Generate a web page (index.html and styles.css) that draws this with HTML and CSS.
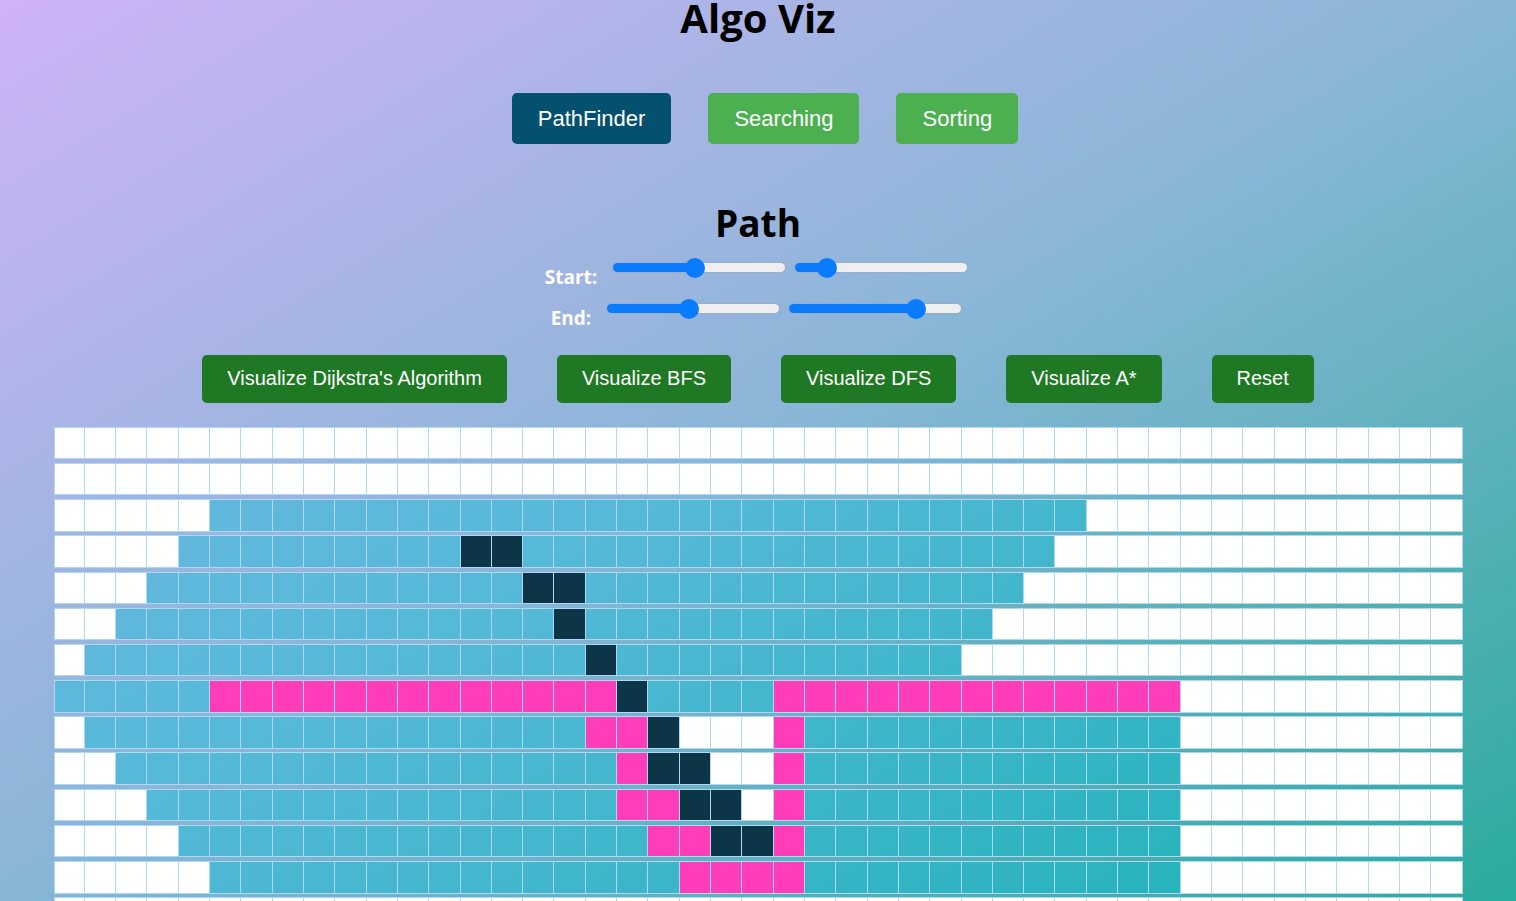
FILE: index.html
```html
<!DOCTYPE html>
<html lang="en">
<head>
<meta charset="utf-8">
<title>Algo Viz</title>
<link rel="stylesheet" href="styles.css">
</head>
<body>
<header class="app-header">
  <h1 class="title">Algo Viz</h1>
  <nav class="tabs">
    <button class="tab tab-active">PathFinder</button>
    <button class="tab">Searching</button>
    <button class="tab">Sorting</button>
  </nav>
</header>
<main class="pathfinder">
  <h2 class="section-title">Path</h2>
  <div class="points">
    <div class="point-row">
      <label class="point-label">Start:</label>
      <input class="slider" type="range" min="0" max="100" value="47" style="--v:0.47">
      <input class="slider" type="range" min="0" max="100" value="14" style="--v:0.14">
    </div>
    <div class="point-row">
      <label class="point-label">End:</label>
      <input class="slider" type="range" min="0" max="100" value="47" style="--v:0.47">
      <input class="slider" type="range" min="0" max="100" value="77" style="--v:0.77">
    </div>
  </div>
  <div class="actions">
    <button class="action-btn">Visualize Dijkstra's Algorithm</button>
    <button class="action-btn">Visualize BFS</button>
    <button class="action-btn">Visualize DFS</button>
    <button class="action-btn">Visualize A*</button>
    <button class="action-btn">Reset</button>
  </div>
  <div class="board" id="board"></div>
</main>
<script src="script.js"></script>
</body>
</html>
```

FILE: styles.css
```css
* {
  box-sizing: border-box;
}

html {
  min-height: 100%;
  background: linear-gradient(to bottom right, #cfb3f7 0%, #88b6d6 50%, #2aab9c 100%) fixed;
}

body {
  margin: 0;
  font-family: "Open Sans", "Noto Sans", sans-serif;
  color: #000;
}

.title {
  margin: 0;
  text-align: center;
  font-size: 40px;
  line-height: 36px;
  font-weight: 700;
}

.tabs {
  display: flex;
  justify-content: center;
  gap: 37px;
  margin-top: 57px;
  padding-left: 14px;
}

.tab {
  font-family: "Liberation Sans", Arial, sans-serif;
  font-size: 22px;
  line-height: 25px;
  color: #fff;
  border: 0;
  border-radius: 5px;
  padding: 13px 26px;
  background: #4caf50;
}

.tab-active {
  background: #04506f;
}

.section-title {
  margin: 59px 0 0;
  text-align: center;
  font-size: 37px;
  line-height: 40px;
  font-weight: 700;
}

.points {
  margin-top: 4px;
  padding-right: 4px;
}

.point-row {
  display: flex;
  justify-content: center;
  align-items: center;
  gap: 10px;
}

.point-label {
  color: #fff;
  font-weight: 700;
  font-size: 19px;
  line-height: 22px;
  margin-top: 19px;
  margin-right: 6px;
}

.slider {
  -webkit-appearance: none;
  appearance: none;
  width: 172px;
  height: 9px;
  margin: 0;
  border: 0;
  border-radius: 5px;
  background: linear-gradient(to right, #0a7bff calc(10px + (100% - 20px) * var(--v)), #efefef 0);
  box-shadow: 0 0 0 1px rgba(160, 160, 160, 0.35);
  outline: none;
}

.slider::-webkit-slider-thumb {
  -webkit-appearance: none;
  appearance: none;
  width: 20px;
  height: 20px;
  border: 0;
  border-radius: 50%;
  background: #0a7bff;
}

.actions {
  display: flex;
  justify-content: center;
  gap: 50px;
  margin-top: 25.5px;
}

.action-btn {
  font-family: "Liberation Sans", Arial, sans-serif;
  font-size: 20px;
  line-height: 23px;
  color: #fff;
  border: 0;
  border-radius: 5px;
  padding: 12.5px 25px;
  background: #1f7824;
}

.board {
  width: 1409px;
  margin: 24.3px auto 0;
  display: grid;
  grid-template-columns: repeat(45, 1fr);
  grid-auto-rows: 32.5px;
  row-gap: 3.7px;
}

.cell {
  background: #fff;
  border: 1px solid #afd8f8;
  border-left-width: 0;
}

.cell:nth-child(45n + 1) {
  border-left-width: 1px;
}

.cell-visited {
  background: rgba(0, 190, 218, 0.38);
}

.cell-wall {
  background: #0c3547;
}

.cell-path {
  background: #ff3db9;
}
```

FILE: script.js
```js
(function () {
  var rows = [
    "45.",
    "45.",
    "5. 28v 12.",
    "4. 9v 2w 17v 13.",
    "3. 12v 2w 14v 14.",
    "2. 14v 1w 13v 15.",
    "1. 16v 1w 11v 16.",
    "5v 13p 1w 4v 13p 9.",
    "1. 16v 2p 1w 3. 1p 12v 9.",
    "2. 16v 1p 2w 2. 1p 12v 9.",
    "3. 15v 2p 2w 1. 1p 12v 9.",
    "4. 15v 2p 2w 1p 12v 9.",
    "5. 15v 4p 12v 9.",
    "45.",
    "45.",
    "45."
  ];
  var kinds = { ".": "cell", v: "cell cell-visited", w: "cell cell-wall", p: "cell cell-path" };
  var board = document.getElementById("board");
  var frag = document.createDocumentFragment();
  rows.forEach(function (spec) {
    spec.split(" ").forEach(function (tok) {
      var n = parseInt(tok, 10);
      var k = tok.charAt(tok.length - 1);
      for (var i = 0; i < n; i++) {
        var d = document.createElement("div");
        d.className = kinds[k];
        frag.appendChild(d);
      }
    });
  });
  board.appendChild(frag);
})();
```
